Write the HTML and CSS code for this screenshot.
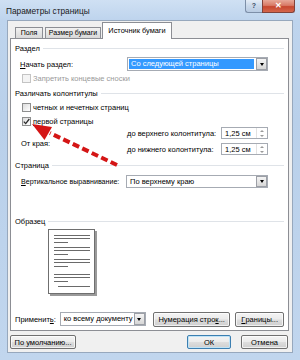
FILE: index.html
```html
<!DOCTYPE html>
<html lang="ru">
<head>
<meta charset="utf-8">
<title>Параметры страницы</title>
<link rel="stylesheet" href="styles.css">
</head>
<body>
<div class="window">
  <div class="titlebar">
    <span class="title">Параметры страницы</span>
    <div class="caption">
      <div class="cap-help">?</div>
      <div class="cap-close">✕</div>
    </div>
  </div>
  <div class="client">
    <div class="tabs">
      <div class="tab t1">Поля</div>
      <div class="tab t2">Размер бумаги</div>
      <div class="tab active">Источник бумаги</div>
    </div>
    <div class="panel">
      <div class="sect s1"><span>Раздел</span></div>
      <div class="frow r1">
        <span class="lbl"><u>Н</u>ачать раздел:</span>
        <div class="combo"><span class="val hl">Со следующей страницы</span><span class="dd"><i></i></span></div>
      </div>
      <div class="cbrow r2 disabled"><span class="cb"></span><span>Запретить концевые сноски</span></div>
      <div class="sect s2"><span>Различать колонтитулы</span></div>
      <div class="cbrow r3"><span class="cb"></span><span>четных и нечетных страниц</span></div>
      <div class="cbrow r4"><span class="cb checked"><svg viewBox="0 0 9 9" width="9" height="9"><path d="M1.8 4.6 L3.7 6.6 L7.3 2" fill="none" stroke="#2a2a2a" stroke-width="1.3"/></svg></span><span><u>п</u>ервой страницы</span></div>
      <div class="hfgrid">
        <span class="edge">От края:</span>
        <span class="hlbl">до верхнего колонтитула:</span>
        <div class="spin"><span class="val">1,25 см</span><span class="arrows"><i class="up"></i><i class="down"></i></span></div>
        <span class="hlbl">до нижнего колонтитула:</span>
        <div class="spin"><span class="val">1,25 см</span><span class="arrows"><i class="up"></i><i class="down"></i></span></div>
      </div>
      <div class="sect s3"><span>Страница</span></div>
      <div class="frow r5">
        <span class="lbl"><u>В</u>ертикальное выравнивание:</span>
        <div class="combo c2"><span class="val">По верхнему краю</span><span class="dd"><i></i></span></div>
      </div>
      <div class="sect s4"><span>Образец</span></div>
      <div class="preview">
        <svg width="50" height="68" viewBox="0 0 50 68">
          <rect x="2" y="2" width="47" height="65" fill="#9a9a9a"/>
          <rect x="0.5" y="0.5" width="46" height="64" fill="#fff" stroke="#6f6f6f"/>
          <g stroke="#6a6a6a" stroke-width="1">
            <line x1="6" y1="6.5" x2="42" y2="6.5"/>
            <line x1="6" y1="9.5" x2="42" y2="9.5"/>
            <line x1="6" y1="13.5" x2="20" y2="13.5"/>
            <line x1="6" y1="18.5" x2="42" y2="18.5"/>
            <line x1="6" y1="21.5" x2="42" y2="21.5"/>
            <line x1="6" y1="25.5" x2="20" y2="25.5"/>
            <line x1="6" y1="30.5" x2="42" y2="30.5"/>
            <line x1="6" y1="33.5" x2="42" y2="33.5"/>
            <line x1="6" y1="37.5" x2="20" y2="37.5"/>
            <line x1="6" y1="45.5" x2="42" y2="45.5"/>
            <line x1="6" y1="48.5" x2="42" y2="48.5"/>
            <line x1="6" y1="52.5" x2="20" y2="52.5"/>
            <line x1="10" y1="57.5" x2="42" y2="57.5"/>
          </g>
        </svg>
      </div>
      <div class="applyrow">
        <span class="albl">Применит<u>ь</u>:</span>
        <div class="combo c3"><span class="val">ко всему документу</span><span class="dd"><i></i></span></div>
        <div class="btn b-num">Нумерация стро<u>к</u>...</div>
        <div class="btn b-brd"><u>Г</u>раницы...</div>
      </div>
    </div>
    <div class="footer">
      <div class="btn b-def">По умолчанию...</div>
      <div class="btn b-ok">ОК</div>
      <div class="btn b-cancel">Отмена</div>
    </div>
  </div>
  <svg class="arrow" width="300" height="360" viewBox="0 0 300 360">
    <line x1="117" y1="165" x2="50" y2="133" stroke="#d41515" stroke-width="4" stroke-dasharray="7 3.5"/>
    <polygon points="32,124 52,127 44.5,140" fill="#d41515"/>
  </svg>
</div>
</body>
</html>
```

FILE: styles.css
```css
html, body {
  margin: 0;
  padding: 0;
}
body {
  width: 300px;
  height: 360px;
  overflow: hidden;
  font-family: "Liberation Sans", Arial, sans-serif;
  font-size: 7.5px;
  color: #000;
  background: #fff;
}
.window {
  position: relative;
  width: 300px;
  height: 360px;
  box-sizing: border-box;
  padding: 0 7px 7px 7px;
  display: flex;
  flex-direction: column;
  background: linear-gradient(180deg, #cfe0f3 0px, #bed4ed 20px, #b9d0ea 120px, #c1d6ee 360px);
}
.titlebar {
  height: 20px;
  display: flex;
  align-items: flex-start;
}
.title {
  margin-left: -1px;
  padding-top: 6px;
  font-size: 8.3px;
  color: #1a1a1a;
  white-space: nowrap;
}
.caption {
  margin-left: auto;
  margin-right: -2px;
  display: flex;
}
.cap-help {
  width: 17px;
  height: 13px;
  box-sizing: border-box;
  border: 1px solid #7d8fa8;
  border-top: none;
  border-right: none;
  border-bottom-left-radius: 3px;
  background: linear-gradient(180deg, #e4ecf6, #c9d8ea 50%, #b9cbe2);
  color: #3b4d66;
  font-size: 7px;
  font-weight: bold;
  text-align: center;
  line-height: 12px;
}
.cap-close {
  width: 33px;
  height: 13px;
  box-sizing: border-box;
  border: 1px solid #80423a;
  border-top: none;
  border-bottom-right-radius: 3px;
  background: linear-gradient(180deg, #e7a898, #d87a66 45%, #c7472f 55%, #d4664b);
  color: #fff;
  font-size: 7.5px;
  font-weight: bold;
  text-align: center;
  line-height: 12px;
}
.client {
  flex: 1;
  display: flex;
  flex-direction: column;
  background: #f0f0f0;
  border: 1px solid #97a8bd;
}
.tabs {
  display: flex;
  align-items: flex-end;
  height: 15px;
  margin-top: 2px;
  padding-left: 7px;
  position: relative;
  z-index: 2;
}
.tab {
  height: 11px;
  box-sizing: border-box;
  margin-right: 2px;
  border: 1px solid #8c8e94;
  border-bottom: none;
  background: linear-gradient(180deg, #f2f2f2, #e4e4e4 50%, #d9d9d9);
  line-height: 10px;
  font-size: 7px;
  white-space: nowrap;
  text-align: center;
}
.t1 { width: 28px; }
.t2 { width: 56px; }
.tab.active {
  width: 70px;
  height: 17px;
  margin-bottom: -1px;
  margin-left: -1px;
  background: #fff;
  line-height: 15px;
  font-size: 7.4px;
}
.panel {
  height: 293px;
  box-sizing: border-box;
  margin: 0 3px 0 2px;
  border: 1px solid #8c8e94;
  background: #fff;
  padding: 0 4px 0 4px;
  display: flex;
  flex-direction: column;
}
.sect {
  display: flex;
  align-items: center;
  height: 10px;
  gap: 3px;
  color: #000;
  white-space: nowrap;
}
.sect::after {
  content: "";
  flex: 1;
  height: 1px;
  background: #dfe3e8;
}
.s1 { margin-top: 4px; }
.s2 { margin-top: 5px; }
.s3 { margin-top: 5px; }
.s4 { margin-top: 28px; }
.frow {
  display: grid;
  grid-template-columns: 107px 141px;
  align-items: center;
  padding-left: 5px;
}
.lbl { white-space: nowrap; }
.r5 .lbl { font-size: 7.1px; padding-left: 1px; }
.r1 { margin-top: 4px; height: 14px; }
.r5 { margin-top: 5px; height: 13px; }
.combo {
  height: 14px;
  box-sizing: border-box;
  border: 1px solid #a6abb3;
  background: #fff;
  display: flex;
  align-items: stretch;
  padding: 1px;
}
.combo.c2 {
  height: 13px;
  margin-left: -1px;
}
.combo .val {
  flex: 1;
  padding-left: 2px;
  line-height: 10px;
  white-space: nowrap;
  overflow: hidden;
}
.combo .val.hl {
  background: #3399ff;
  color: #fff;
  margin-right: 2px;
}
.dd {
  width: 11px;
  flex: none;
  box-sizing: border-box;
  border: 1px solid #9c9fa6;
  background: linear-gradient(180deg, #f4f4f4, #e6e6e6 50%, #d6d6d6);
  display: flex;
  align-items: center;
  justify-content: center;
  margin: -1px -1px -1px 0;
}
.dd i {
  width: 0;
  height: 0;
  border-left: 2.5px solid transparent;
  border-right: 2.5px solid transparent;
  border-top: 3px solid #000;
}
.cbrow {
  display: flex;
  align-items: center;
  gap: 2px;
  height: 10px;
  padding-left: 7px;
  white-space: nowrap;
}
.r2 { margin-top: 2px; }
.r3 { margin-top: 4px; }
.r4 { margin-top: 4px; }
.cb {
  width: 9px;
  height: 9px;
  flex: none;
  box-sizing: border-box;
  border: 1px solid #8e8f8f;
  background: linear-gradient(135deg, #dcdcdc, #f5f5f5 70%, #fff);
  display: flex;
  align-items: center;
  justify-content: center;
}
.cb svg {
  display: block;
  margin: -1px;
}
.disabled { color: #9a9a9a; }
.disabled .cb {
  border-color: #c4c4c4;
  background: #f4f4f4;
}
.hfgrid {
  margin-top: 1px;
  display: grid;
  grid-template-columns: 106px 94px 47px;
  grid-template-rows: 12px 12px;
  row-gap: 4px;
  align-items: center;
  padding-left: 6px;
}
.edge {
  grid-row: 1 / span 2;
  grid-column: 1;
  align-self: center;
  padding-top: 4px;
}
.hlbl { white-space: nowrap; }
.spin {
  height: 12px;
  box-sizing: border-box;
  border: 1px solid #a6abb3;
  background: #fff;
  display: flex;
  align-items: center;
}
.spin .val {
  flex: 1;
  padding-left: 3px;
  white-space: nowrap;
}
.arrows {
  width: 10px;
  height: 10px;
  display: flex;
  flex-direction: column;
  align-items: center;
  justify-content: space-around;
  border-left: 1px solid #e2e2e2;
}
.arrows i {
  width: 0;
  height: 0;
  border-left: 2px solid transparent;
  border-right: 2px solid transparent;
}
.arrows .up { border-bottom: 2.5px solid #9a9a9a; }
.arrows .down { border-top: 2.5px solid #9a9a9a; }
.preview {
  margin-top: 3px;
  padding-left: 33px;
  height: 68px;
}
.preview svg { display: block; }
.applyrow {
  margin-top: 14px;
  display: flex;
  align-items: center;
  height: 16px;
}
.albl { width: 45px; white-space: nowrap; }
.combo.c3 {
  width: 87px;
  height: 14px;
}
.btn {
  height: 15px;
  box-sizing: border-box;
  border: 1px solid #707070;
  border-radius: 2px;
  background: linear-gradient(180deg, #f4f4f4, #ebebeb 48%, #dddddd 52%, #cfcfcf);
  box-shadow: inset 0 0 0 1px rgba(255,255,255,0.7);
  display: flex;
  align-items: center;
  justify-content: center;
  white-space: nowrap;
}
.b-num { width: 78px; margin-left: 7px; }
.b-brd { width: 49px; margin-left: 5px; }
.footer {
  flex: 1;
  display: flex;
  align-items: flex-start;
  padding: 4px 4px 0 2px;
}
.footer .btn { height: 14px; }
.b-def { width: 66px; }
.b-ok {
  width: 44px;
  margin-left: auto;
  border-color: #3c7fb1;
  box-shadow: inset 0 0 0 1px #bfe3f7;
}
.b-cancel { width: 47px; margin-left: 10px; }
.arrow {
  position: absolute;
  left: 0;
  top: 0;
  pointer-events: none;
}
```
